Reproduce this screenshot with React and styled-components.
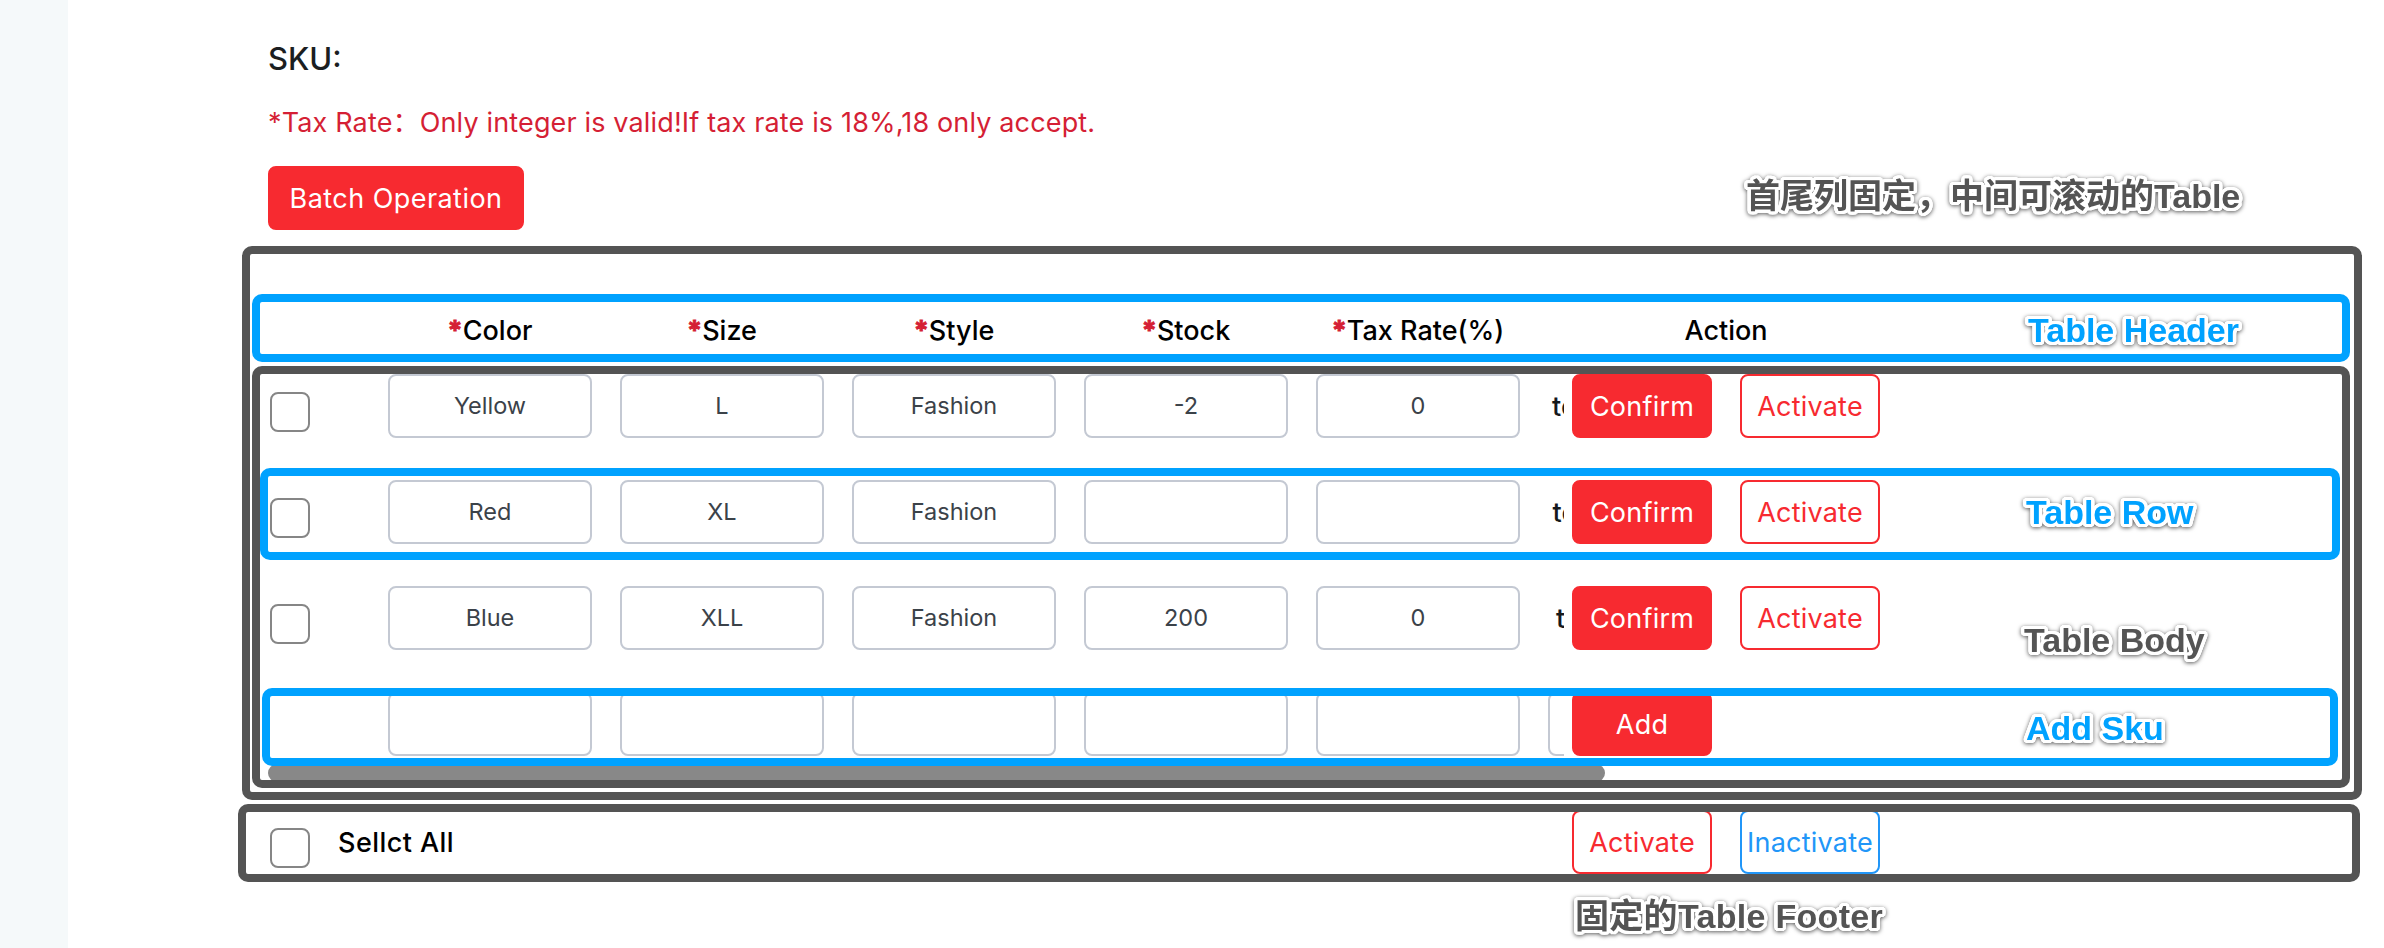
import React from "react";
import styled, { createGlobalStyle } from "styled-components";

const GREY = "#545454";
const BLUE = "#00a2ff";
const RED = "#f72a30";

const GlobalStyle = createGlobalStyle`
  *, *::before, *::after { box-sizing: border-box; }
  body {
    margin: 0;
    background: #fff;
    font-family: Inter, "Noto Sans CJK SC", sans-serif;
    font-size: 27px;
    line-height: 40px;
    color: #000;
  }
`;

const Page = styled.div`
  position: relative;
  display: flex;
  width: 2384px;
  height: 948px;
  overflow: hidden;
`;

const Sidebar = styled.aside`
  flex: none;
  width: 68px;
  background: #f5f9fa;
`;

const Main = styled.main`
  flex: 1;
  display: flex;
  flex-direction: column;
  align-items: flex-start;
`;

const Intro = styled.section`
  padding: 38px 0 0 200px;
  display: flex;
  flex-direction: column;
  align-items: flex-start;
`;

const Title = styled.h1`
  margin: 0;
  font-size: 31px;
  font-weight: 550;
  line-height: 42px;
  color: #1b1e21;
  white-space: nowrap;
`;

const Notice = styled.p`
  margin: 23px 0;
  color: #d51f35;
  letter-spacing: 0.15px;
  white-space: nowrap;
`;

const Button = styled.button`
  flex: none;
  width: ${(p) => p.$width || 140}px;
  height: 64px;
  padding: 2px 0 0;
  border: 2px solid ${(p) => p.$color || RED};
  border-radius: 8px;
  background: ${(p) => (p.$filled ? RED : "#fff")};
  color: ${(p) => (p.$filled ? "#fff" : p.$color || RED)};
  font: inherit;
  letter-spacing: ${(p) => (p.$width ? 0.45 : 0.22)}px;
  white-space: nowrap;
`;

const Frame = styled.div`
  width: ${(p) => p.$width}px;
  height: ${(p) => p.$height}px;
  border: 8px solid ${(p) => p.$color || GREY};
  border-radius: 10px;
`;

const TableFrame = styled(Frame)`
  margin: 16px 0 0 174px;
  padding: 40px 2px 0;
  display: flex;
  flex-direction: column;
  gap: 4px;
`;

const HeaderFrame = styled(Frame)`
  display: flex;
  align-items: center;
  padding: 6px 0 0 128px;
`;

const BodyFrame = styled(Frame)`
  position: relative;
  overflow: hidden;
  display: flex;
  flex-direction: column;
  gap: 42px;
`;

const FooterFrame = styled(Frame)`
  margin: 4px 0 0 170px;
  padding-left: 24px;
  display: flex;
  align-items: flex-end;
  overflow: hidden;
`;

const Row = styled.div`
  position: relative;
  display: flex;
  height: 64px;
  padding-left: 10px;
`;

const RowHighlight = styled.div`
  position: absolute;
  left: ${(p) => p.$left}px;
  top: ${(p) => p.$top}px;
  width: ${(p) => p.$width}px;
  height: ${(p) => p.$height}px;
  border: 8px solid ${BLUE};
  border-radius: 10px;
`;

const CheckSlot = styled.div`
  flex: none;
  width: 118px;
  padding-top: 18px;
`;

const Checkbox = styled.span`
  display: block;
  flex: none;
  width: 40px;
  height: 40px;
  border: 2px solid #868686;
  border-radius: 8px;
  background: #fff;
`;

const Columns = styled.div`
  flex: none;
  display: flex;
  gap: 28px;
  width: 1176px;
  margin-right: 8px;
  overflow: hidden;
`;

const HeadCell = styled.div`
  flex: none;
  width: 204px;
  text-align: center;
  font-weight: 550;
  white-space: nowrap;
`;

const ActionHead = styled(HeadCell)`
  width: 308px;
`;

const Star = styled.span`
  color: #d51f35;
  font-weight: 700;
  -webkit-text-stroke: 0.9px #d51f35;
`;

const Field = styled.div`
  flex: none;
  width: 204px;
  height: 64px;
  padding-bottom: 1px;
  border: 2px solid #c4c9d3;
  border-radius: 8px;
  background: #fff;
  display: flex;
  align-items: center;
  justify-content: center;
  font-size: 23.5px;
  color: #3b4249;
`;

const Remark = styled.div`
  flex: none;
  width: 204px;
  padding: 13px 0 0 ${(p) => p.$indent}px;
  font-weight: 500;
  color: #15191c;
`;

const Actions = styled.div`
  display: flex;
  gap: 28px;
`;

const Scrollbar = styled.div`
  position: absolute;
  left: 8px;
  top: 390px;
  width: 1337px;
  height: 18px;
  border-radius: 9px;
  background: #888;
`;

const SelectAll = styled.div`
  flex: none;
  width: 1302px;
  height: 62px;
  display: flex;
  font-weight: 550;
  letter-spacing: 0.45px;
`;

const SelectAllCheck = styled(Checkbox)`
  margin: 16px 28px 0 0;
`;

const SelectAllText = styled.span`
  padding-top: 11px;
`;

// Round white outline built from shadows spaced evenly on a circle.
const OUTLINE = Array.from({ length: 24 }, (_, i) => {
  const angle = (i * Math.PI) / 12;
  return `${(3.4 * Math.cos(angle)).toFixed(2)}px ${(3.4 * Math.sin(angle)).toFixed(2)}px 0 #fff`;
}).join(", ");

const Note = styled.div`
  position: absolute;
  left: ${(p) => p.$x}px;
  top: ${(p) => p.$y}px;
  font-family: "Liberation Sans", "Noto Sans CJK SC", sans-serif;
  font-size: 34px;
  font-weight: 700;
  line-height: 40px;
  letter-spacing: ${(p) => p.$spacing || 0}px;
  color: ${(p) => p.$color || GREY};
  white-space: nowrap;
  text-shadow: ${OUTLINE};
  filter: drop-shadow(0 1px 2px rgba(0, 0, 0, 0.65));
`;

const HEADS = ["Color", "Size", "Style", "Stock", "Tax Rate(%)"];

const ROWS = [
  { values: ["Yellow", "L", "Fashion", "-2", "0"], remark: "te", indent: 4 },
  { values: ["Red", "XL", "Fashion", "", ""], remark: "te", indent: 4.5, highlight: true },
  { values: ["Blue", "XLL", "Fashion", "200", "0"], remark: "t", indent: 8 },
];

export default function App() {
  return (
    <Page>
      <GlobalStyle />
      <Sidebar />
      <Main>
        <Intro>
          <Title>SKU:</Title>
          <Notice>*Tax Rate：Only integer is valid!If tax rate is 18%,18 only accept.</Notice>
          <Button $filled $width={256}>Batch Operation</Button>
        </Intro>
        <TableFrame $width={2120} $height={554}>
          <HeaderFrame $width={2098} $height={68} $color={BLUE}>
            <Columns>
              {HEADS.map((head) => (
                <HeadCell key={head}>
                  <Star>*</Star>
                  {head}
                </HeadCell>
              ))}
            </Columns>
            <ActionHead>Action</ActionHead>
          </HeaderFrame>
          <BodyFrame $width={2098} $height={422}>
            <Scrollbar />
            {ROWS.map((row, i) => (
              <Row key={i}>
                <CheckSlot>
                  <Checkbox />
                </CheckSlot>
                <Columns>
                  {row.values.map((value, j) => (
                    <Field key={j}>{value}</Field>
                  ))}
                  <Remark $indent={row.indent}>{row.remark}</Remark>
                </Columns>
                <Actions>
                  <Button $filled>Confirm</Button>
                  <Button>Activate</Button>
                </Actions>
                {row.highlight && <RowHighlight $left={0} $top={-12} $width={2080} $height={92} />}
              </Row>
            ))}
            <Row>
              <CheckSlot />
              <Columns>
                {[0, 1, 2, 3, 4, 5].map((j) => (
                  <Field key={j} />
                ))}
              </Columns>
              <Actions>
                <Button $filled>Add</Button>
              </Actions>
              <RowHighlight $left={2} $top={-4} $width={2076} $height={78} />
            </Row>
          </BodyFrame>
        </TableFrame>
        <FooterFrame $width={2122} $height={78}>
          <SelectAll>
            <SelectAllCheck />
            <SelectAllText>Sellct All</SelectAllText>
          </SelectAll>
          <Actions>
            <Button>Activate</Button>
            <Button $color="#2196f8">Inactivate</Button>
          </Actions>
        </FooterFrame>
      </Main>
      <Note $x={1746} $y={176}>首尾列固定，中间可滚动的Table</Note>
      <Note $x={2028} $y={310} $color={BLUE}>Table Header</Note>
      <Note $x={2026} $y={492} $color={BLUE}>Table Row</Note>
      <Note $x={2024} $y={620}>Table Body</Note>
      <Note $x={2026} $y={708} $color={BLUE}>Add Sku</Note>
      <Note $x={1575} $y={896} $spacing={0.3}>固定的Table Footer</Note>
    </Page>
  );
}
